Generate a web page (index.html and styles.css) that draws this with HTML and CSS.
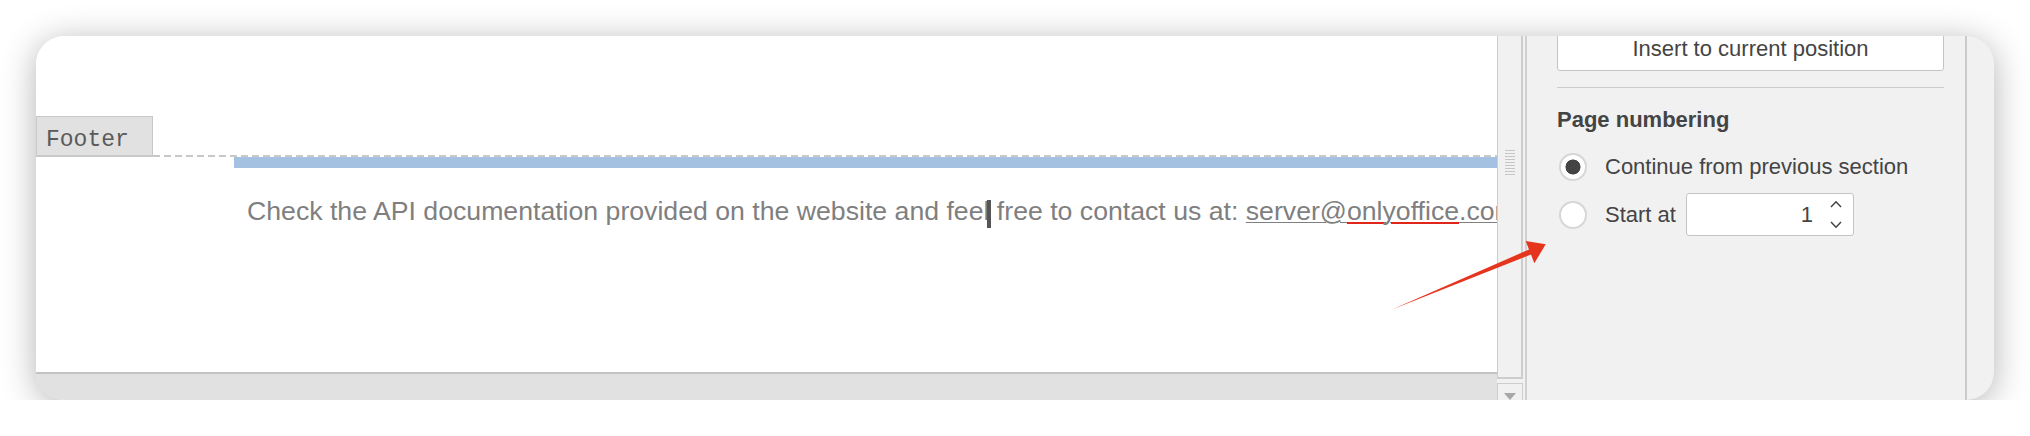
FILE: index.html
```html
<!DOCTYPE html>
<html lang="en">
<head>
    <meta charset="UTF-8">
    <meta name="viewport" content="width=device-width, initial-scale=1.0">
    <title>Footer settings</title>
    <link rel="stylesheet" href="styles.css">
</head>
<body>
    <div class="window">
        <div class="editor">
            <div class="page">
                <div class="footer-bar">
                    <div class="footer-tab">Footer</div>
                    <div class="footer-line"></div>
                </div>
                <div class="selection"></div>
                <p class="doc-text">Check the API documentation provided on the website and fee<span class="caret">l</span> free to contact us at: <span class="link">server@<span class="misspelled">onlyoffice</span>.com</span></p>
            </div>
            <div class="hscroll"></div>
        </div>

        <div class="vscroll">
            <div class="vscroll-track"><div class="grip"></div></div>
            <div class="vscroll-btn"><div class="tri-down"></div></div>
        </div>

        <div class="panel">
            <button class="panel-btn">Insert to current position</button>
            <div class="separator"></div>
            <h3 class="panel-title">Page numbering</h3>
            <div class="radio-row">
                <span class="radio checked"></span>
                <span>Continue from previous section</span>
            </div>
            <div class="radio-row">
                <span class="radio"></span>
                <span>Start at</span>
                <div class="spin-input">
                    <span class="spin-value">1</span>
                    <svg class="spin-arrows" width="12" height="29" viewBox="0 0 12 29">
                        <polyline points="1,7 6,1.8 11,7" />
                        <polyline points="1,22 6,27.2 11,22" />
                    </svg>
                </div>
            </div>
        </div>

        <!-- annotation arrow drawn over the screenshot -->
        <svg class="arrow" width="1958" height="364" viewBox="0 0 1958 364">
            <polygon points="1356,273.5 1493,213.5 1489.7,205 1509.7,208.3 1498.3,227.3 1495,218.5" />
        </svg>
    </div>
</body>
</html>
```

FILE: styles.css
```css
:root {
    --panel-bg: #f1f1f1;
    --border: #c8c8c8;
    --panel-text: #444444;
    --doc-text: #7f7f7f;
}

* {
    margin: 0;
    padding: 0;
    box-sizing: border-box;
}

body {
    background: #ffffff;
    font-family: 'Liberation Sans', Arial, sans-serif;
}

.window {
    position: relative;
    display: flex;
    width: 1958px;
    height: 364px;
    margin: 36px 0 0 36px;
    background: var(--panel-bg);
    border-radius: 28px;
    overflow: hidden;
    box-shadow: 0 5px 34px rgba(0, 0, 0, 0.3);
}

/* document side */
.editor {
    display: flex;
    flex-direction: column;
    width: 1461px;
    flex-shrink: 0;
}

.page {
    flex: 1;
    background: #ffffff;
    padding-top: 80px;
    overflow: hidden;
}

.footer-bar {
    display: flex;
    align-items: flex-end;
    height: 41px;
}

.footer-tab {
    width: 117px;
    height: 41px;
    padding: 10px 0 0 9px;
    background: #e1e1e1;
    border: 1px solid var(--border);
    border-bottom-width: 2px;
    font-family: 'Liberation Mono', 'Courier New', monospace;
    font-size: 23px;
    line-height: 26px;
    color: #5a5a5a;
}

.footer-line {
    flex: 1;
    height: 2px;
    background: repeating-linear-gradient(90deg, var(--border) 0 7px, transparent 7px 11px);
}

.selection {
    height: 11px;
    margin-left: 198px;
    background: #a4c1e1;
}

.doc-text {
    margin: 27px 0 0 211px;
    font-size: 26.66px;
    line-height: 32px;
    color: var(--doc-text);
    white-space: nowrap;
}

.caret {
    position: relative;
}

.caret::after {
    content: '';
    position: absolute;
    left: 3px;
    top: 4px;
    bottom: -2px;
    width: 4px;
    background: #555555;
}

.link {
    text-decoration: underline 1px var(--doc-text);
    text-underline-offset: 2px;
}

.misspelled {
    text-decoration: underline 2px #e0261b;
    text-underline-offset: 2px;
}

.hscroll {
    height: 28px;
    flex-shrink: 0;
    background: #e1e1e1;
    border-top: 2px solid #c3c3c3;
}

/* vertical scrollbar */
.vscroll {
    display: flex;
    flex-direction: column;
    width: 26px;
    flex-shrink: 0;
    margin-right: 2px;
}

.vscroll-track {
    flex-shrink: 0;
    height: 345px;
    margin-top: -2px;
    background: var(--panel-bg);
    border: 1px solid #cdcdcd;
    border-right-width: 2px;
    border-bottom-width: 2px;
}

.grip {
    width: 10px;
    height: 26px;
    margin: 115px auto 0;
    background: repeating-linear-gradient(#c6c6c6 0 1px, transparent 1px 3px);
}

.vscroll-btn {
    flex-shrink: 0;
    height: 26px;
    margin-top: 4px;
    background: var(--panel-bg);
    border: 1px solid #cdcdcd;
}

.tri-down {
    width: 0;
    height: 0;
    margin: 9px auto 0;
    border-left: 6px solid transparent;
    border-right: 6px solid transparent;
    border-top: 7px solid #a8a8a8;
}

/* settings panel */
.panel {
    width: 442px;
    flex-shrink: 0;
    padding: 0 21px 0 30px;
    border-left: 2px solid #d0d0d0;
    border-right: 2px solid #cbcbcb;
    color: var(--panel-text);
    font-size: 22px;
}

.panel-btn {
    display: block;
    width: 100%;
    height: 45px;
    margin-top: -10px;
    background: #ffffff;
    border: 1px solid #c4c4c4;
    border-radius: 3px;
    font-family: inherit;
    font-size: 22px;
    color: var(--panel-text);
}

.separator {
    height: 1px;
    margin-top: 16px;
    background: #cbcbcb;
}

.panel-title {
    margin-top: 19px;
    font-size: 22px;
    line-height: 26px;
    font-weight: bold;
}

.radio-row {
    display: flex;
    align-items: center;
    margin-top: 20px;
    min-height: 28px;
}

.radio-row + .radio-row {
    margin-top: 12px;
}

.radio {
    width: 28px;
    height: 28px;
    margin: 0 18px 0 2px;
    border-radius: 50%;
    background: #ffffff;
    border: 2px solid #d6d6d6;
}

.radio.checked {
    background: radial-gradient(circle, #444444 0 7.2px, #ffffff 7.8px);
}

.spin-input {
    display: flex;
    align-items: center;
    justify-content: flex-end;
    width: 168px;
    height: 43px;
    margin-left: 10px;
    padding-right: 11px;
    background: #ffffff;
    border: 1px solid #c4c4c4;
    border-radius: 3px;
}

.spin-value {
    margin-right: 17px;
}

.spin-arrows polyline {
    fill: none;
    stroke: #444444;
    stroke-width: 1.5;
}

.arrow {
    position: absolute;
    left: 0;
    top: 0;
    pointer-events: none;
}

.arrow polygon {
    fill: #e5351f;
}
```
